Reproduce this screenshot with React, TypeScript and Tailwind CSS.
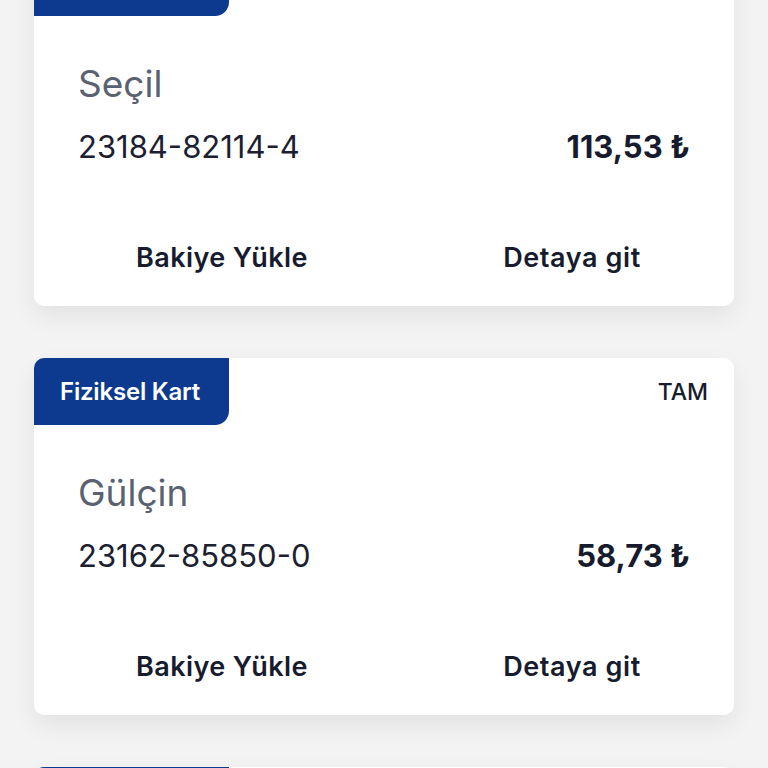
import React from "react";

type Card = {
  name: string;
  number: string;
  balance: string;
};

const cards: Card[] = [
  { name: "Seçil", number: "23184-82114-4", balance: "113,53 ₺" },
  { name: "Gülçin", number: "23162-85850-0", balance: "58,73 ₺" },
  { name: "Ayşe", number: "23101-44012-7", balance: "12,00 ₺" },
];

function CardItem({ card }: { card: Card }) {
  return (
    <div className="bg-white rounded-[10px] shadow-[0_10px_24px_rgba(0,0,0,0.07)] h-[357px] flex flex-col shrink-0 overflow-hidden">
      {/* Header */}
      <div className="flex justify-between items-start">
        <div className="bg-[#0d3a8e] h-[67px] w-[195px] rounded-br-[14px] flex items-center pl-[26px] text-white text-[24px] font-semibold tracking-[-0.2px]">
          Fiziksel Kart
        </div>
        <span className="mt-[20px] mr-[26px] text-[23px] font-medium text-[#161b2e] leading-[28px]">
          TAM
        </span>
      </div>

      {/* Body */}
      <div className="px-[44px] pt-[45px] flex flex-col gap-[22px]">
        <p className="text-[37px] leading-[46px] text-[#5a6170]">{card.name}</p>
        <div className="flex justify-between items-center">
          <span className="text-[31px] leading-[36px] text-[#1b2030]">
            {card.number}
          </span>
          <span className="text-[31px] leading-[36px] font-bold text-[#161b2e]">
            {card.balance}
          </span>
        </div>
      </div>

      {/* Actions */}
      <div className="flex mt-auto mb-[30px]">
        <button className="flex-1 pl-[26px] text-[27px] leading-[36px] font-semibold text-[#161b2e] tracking-[0.4px]">
          Bakiye Yükle
        </button>
        <button className="flex-1 pl-[26px] text-[27px] leading-[36px] font-semibold text-[#161b2e] tracking-[0.6px]">
          Detaya git
        </button>
      </div>
    </div>
  );
}

export default function App() {
  return (
    <div className="w-[768px] h-[768px] overflow-hidden bg-[#f3f3f4] font-['Inter',sans-serif]">
      <div className="flex flex-col gap-[52px] px-[34px] mt-[-51px]">
        {cards.map((c) => (
          <CardItem key={c.number} card={c} />
        ))}
      </div>
    </div>
  );
}
